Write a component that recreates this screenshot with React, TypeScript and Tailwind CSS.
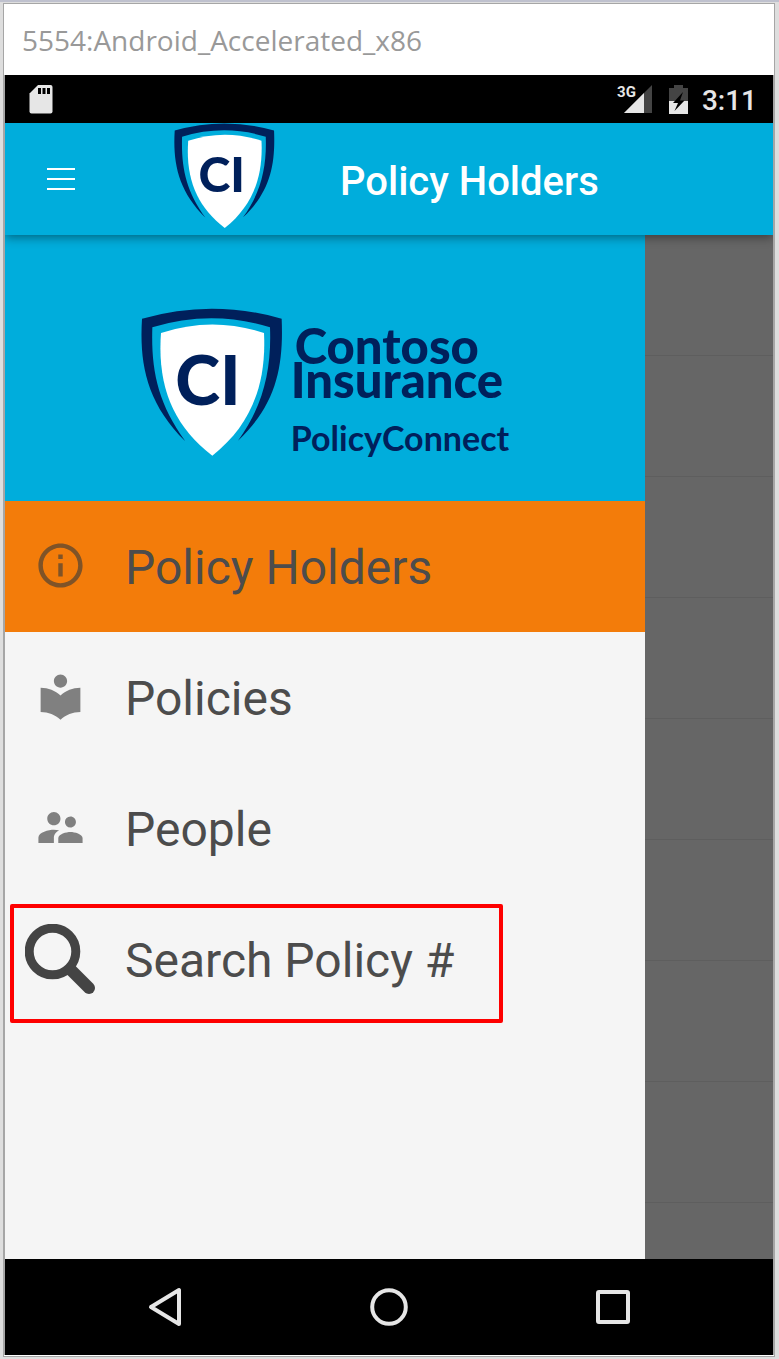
import type { ReactNode } from "react";
import { MdInfoOutline, MdLocalLibrary, MdSupervisorAccount } from "react-icons/md";

function Shield({ className }: { className: string }) {
  return (
    <svg viewBox="63 56 426 446" className={className} role="img" aria-label="Contoso Insurance shield">
      <path
        fill="#00205b"
        d="M66 88Q275 28 485 88C491 230 470 345 354 454C430 350 455 240 450 114Q275 60 97 114C93 240 112 340 196 456C78 340 58 220 66 88Z"
      />
      <path fill="#fff" d="M123 131Q277 80 432 131C440 290 390 410 277 499C160 410 111 290 123 131Z" />
      <text
        x="264"
        y="346"
        textAnchor="middle"
        className="fill-[#00205b] font-[Lato,sans-serif] text-[204px] font-black"
      >
        CI
      </text>
    </svg>
  );
}

function SearchIcon() {
  return (
    <svg viewBox="0 0 70 70" className="size-[70px]" fill="none" stroke="#444" aria-hidden="true">
      <circle cx="27.5" cy="27.5" r="23.3" strokeWidth="9" />
      <path d="M46 46L64 64" strokeWidth="12" strokeLinecap="round" />
    </svg>
  );
}

function StatusBar() {
  return (
    <div className="flex h-12 items-center bg-black pr-4 pl-6 text-[#e6e6e6]">
      <svg viewBox="0 0 24 29" className="h-[29px] w-6" aria-hidden="true">
        <path fill="#e6e6e6" d="M9 0H21.500a2 2 0 0 1 2 2V26.500a2 2 0 0 1-2 2H2.500a2 2 0 0 1-2-2V8.500Z" />
        <path fill="#000" d="M9 3h3v6H9zM13.500 3h3v6h-3zM18 3h3v6h-3z" />
      </svg>
      <div className="ml-auto flex items-center">
        <div className="relative">
          <svg viewBox="0 0 28 28" className="size-7" aria-hidden="true">
            <path fill="#444" d="M28 0V28H0Z" />
            <path fill="#e6e6e6" d="M20 8V28H0Z" />
          </svg>
          <span className="absolute -top-px right-4 font-[Roboto,sans-serif] text-[15px] leading-4 font-bold">3G</span>
        </div>
        <svg viewBox="0 0 19 29" className="ml-[17px] h-[29px] w-[19px]" aria-hidden="true">
          <path fill="#444" d="M5 0h9v3h5v13H0V3h5Z" />
          <path fill="#e6e6e6" d="M0 16H19V29H0Z" />
          <path fill="#000" d="M14 7L4 18h5l-3.500 8L15.500 15.500H11Z" />
        </svg>
        <span className="ml-3.5 pt-1 font-[Roboto,sans-serif] text-[28px] leading-8 font-medium">3:11</span>
      </div>
    </div>
  );
}

function AppBar() {
  return (
    <header className="relative z-10 flex h-28 items-center bg-[#00addc] pl-[42px] shadow-[0_2px_10px_rgba(0,0,0,0.45)]">
      <button type="button" aria-label="Close menu" className="flex flex-col gap-2">
        <span className="h-0.5 w-7 bg-white" />
        <span className="h-0.5 w-7 bg-white" />
        <span className="h-0.5 w-7 bg-white" />
      </button>
      <Shield className="ml-[99px] w-[101px] self-start" />
      <h1 className="ml-[65px] pt-1.5 font-[Roboto,sans-serif] text-[40px] leading-12 font-medium text-white">
        Policy Holders
      </h1>
    </header>
  );
}

function DrawerItem({
  icon,
  label,
  active = false,
  outlined = false,
}: {
  icon: ReactNode;
  label: string;
  active?: boolean;
  outlined?: boolean;
}) {
  return (
    <li className="relative">
      <a
        href="#"
        aria-current={active ? "page" : undefined}
        className={`flex h-[131px] items-center gap-[30px] pl-5 font-[Roboto,sans-serif] text-[48px] leading-14 text-[#4c4c4c] ${
          active ? "bg-[#f37c0a]" : ""
        }`}
      >
        <span className="flex w-[70px] justify-center pb-0.5">{icon}</span>
        <span className="pt-0.5">{label}</span>
      </a>
      {outlined && (
        <span className="pointer-events-none absolute top-2.5 bottom-0.5 left-[5px] w-[493px] rounded-xs border-4 border-[#fe0000]" />
      )}
    </li>
  );
}

function Drawer() {
  return (
    <nav className="w-5/6 bg-[#f5f5f5]">
      <div className="flex h-[266px] justify-center gap-2 bg-[#00addc] pt-[73px]">
        <Shield className="w-[142px] self-start" />
        <div className="pt-5 font-[Lato,sans-serif] text-[#00205b]">
          <p className="pl-1 text-[49px] leading-[34px] font-black">Contoso</p>
          <p className="text-[49px] leading-[34px] font-black">Insurance</p>
          <p className="mt-5 text-[34px] leading-11 font-bold">PolicyConnect</p>
        </div>
      </div>
      <ul>
        <DrawerItem active label="Policy Holders" icon={<MdInfoOutline className="size-[53px] text-[#7f5327]" />} />
        <DrawerItem label="Policies" icon={<MdLocalLibrary className="size-[53px] text-[#808080]" />} />
        <DrawerItem label="People" icon={<MdSupervisorAccount className="size-[53px] text-[#808080]" />} />
        <DrawerItem outlined label="Search Policy #" icon={<SearchIcon />} />
      </ul>
    </nav>
  );
}

function NavigationBar() {
  return (
    <footer className="flex h-24 items-center justify-center bg-black">
      <button type="button" aria-label="Back" className="flex w-56 justify-center">
        <svg viewBox="0 0 34 40" className="h-10 w-[34px]" fill="none" stroke="#e6e6e6" strokeWidth="4" strokeLinejoin="round" aria-hidden="true">
          <path d="M31 3V37L3 20Z" />
        </svg>
      </button>
      <button type="button" aria-label="Home" className="flex w-56 justify-center">
        <svg viewBox="0 0 40 40" className="size-10" fill="none" stroke="#e6e6e6" strokeWidth="4" aria-hidden="true">
          <circle cx="20" cy="20" r="16.800" />
        </svg>
      </button>
      <button type="button" aria-label="Recent apps" className="flex w-56 justify-center">
        <svg viewBox="0 0 34 34" className="size-[34px]" fill="none" stroke="#e6e6e6" strokeWidth="4" aria-hidden="true">
          <rect x="2" y="2" width="30" height="30" rx="1" />
        </svg>
      </button>
    </footer>
  );
}

const rows = [1, 2, 3, 4, 5, 6, 7, 8];

export default function App() {
  return (
    <div className="flex min-h-screen flex-col border-t-2 border-[#bfc1ce] bg-[#dedede] pt-px pr-1 pb-0.5 pl-[3px]">
      <div className="flex flex-1 flex-col border border-[#a6a6a6] bg-white pb-px">
        <div className="flex h-[71px] items-center pl-[18px] font-['Open_Sans',sans-serif] text-[28px] leading-10 text-[#999]">
          5554:Android_Accelerated_x86
        </div>
        <div className="flex flex-1 flex-col overflow-hidden border-x border-[#a6a6a6]">
          <StatusBar />
          <AppBar />
          <main className="flex flex-1 bg-[#666]">
            <Drawer />
            <ul className="flex-1">
              {rows.map((row) => (
                <li key={row} className="h-[121px] border-b border-[#5e5e5e]" />
              ))}
            </ul>
          </main>
          <NavigationBar />
        </div>
      </div>
    </div>
  );
}
